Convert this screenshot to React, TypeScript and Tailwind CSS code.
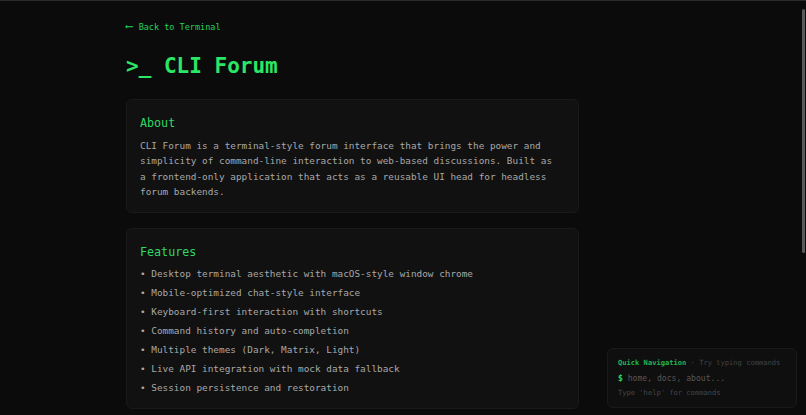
import React from "react";

const features = [
  "Desktop terminal aesthetic with macOS-style window chrome",
  "Mobile-optimized chat-style interface",
  "Keyboard-first interaction with shortcuts",
  "Command history and auto-completion",
  "Multiple themes (Dark, Matrix, Light)",
  "Live API integration with mock data fallback",
  "Session persistence and restoration",
];

const mono = "font-['DejaVu_Sans_Mono','Liberation_Mono',monospace]";

export default function App() {
  return (
    <div
      className={`relative h-[415px] w-full overflow-hidden border-t border-[#2c2c2c] bg-[#0b0b0b] ${mono}`}
    >
      {/* Page */}
      <div className="ml-[126px] flex w-[453px] flex-col pt-[20px]">
        <a className="flex h-[12px] items-center gap-[6px] text-[8.5px] leading-[12px] text-[#22d35c]">
          <span className="text-[11px] leading-[12px]">⟵</span>
          <span>Back to Terminal</span>
        </a>

        <h1 className="mt-[19px] text-[21px] font-bold leading-[28px] text-[#2be765]">
          &gt;_ CLI Forum
        </h1>

        {/* About */}
        <section className="mt-[19px] rounded-[6px] border border-[#1a1a1a] bg-[#111111] pl-[13px] pr-[24px] pt-[15px] pb-[13px]">
          <h2 className="text-[11.7px] font-medium leading-[16px] text-[#2fd864]">About</h2>
          <p className="mt-[7px] text-[9.4px] leading-[15.3px] text-[#a8a8a8]">
            CLI Forum is a terminal-style forum interface that brings the power and
            simplicity of command-line interaction to web-based discussions. Built as
            a frontend-only application that acts as a reusable UI head for headless
            forum backends.
          </p>
        </section>

        {/* Features */}
        <section className="mt-[15px] rounded-[6px] border border-[#1a1a1a] bg-[#111111] px-[13px] pt-[15px] pb-[11px]">
          <h2 className="text-[11.7px] font-medium leading-[16px] text-[#2fd864]">Features</h2>
          <ul className="mt-[4px] flex flex-col text-[9.4px] leading-[19px] text-[#a8a8a8]">
            {features.map((f) => (
              <li key={f} className="whitespace-pre">
                {"• " + f}
              </li>
            ))}
          </ul>
        </section>

        <div className="h-[200px]" />
      </div>

      {/* Scrollbar thumb */}
      <div className="absolute top-[8px] right-[1px] h-[244px] w-[3px] rounded-full bg-[#5a5a5a]" />

      {/* Quick navigation */}
      <div className="absolute right-[9px] bottom-[7px] flex w-[190px] flex-col gap-[3px] rounded-[6px] border border-[#1a1a1a] bg-[#0f0f0f] px-[10px] py-[8px]">
        <div className="text-[7.1px] leading-[12px] whitespace-pre">
          <span className="font-bold text-[#22b653]">Quick Navigation</span>
          <span className="text-[#444444]"> · Try typing commands</span>
        </div>
        <div className="text-[8.1px] leading-[12px] whitespace-pre">
          <span className="font-bold text-[#2bd562]">$</span>
          <span className="text-[#575757]"> home, docs, about...</span>
        </div>
        <div className="text-[7.1px] leading-[12px] text-[#464646]">
          Type 'help' for commands
        </div>
      </div>
    </div>
  );
}
